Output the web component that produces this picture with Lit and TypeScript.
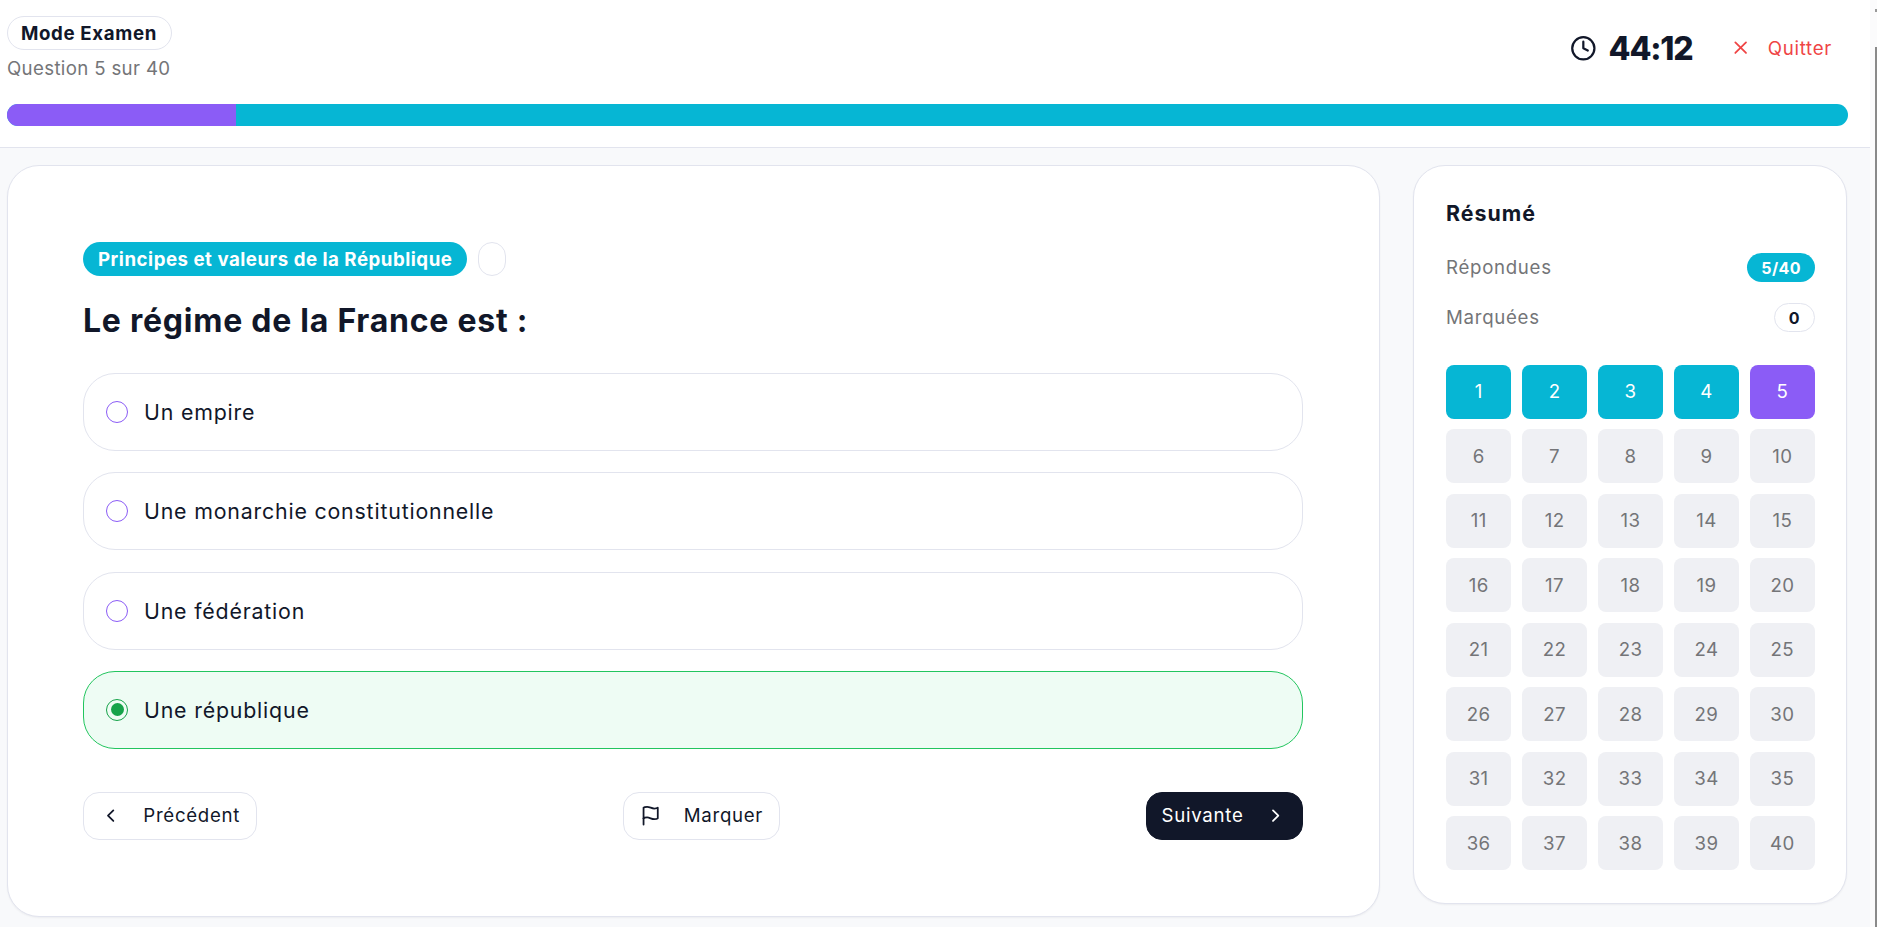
import { LitElement, html, css, svg } from "lit";
import { customElement } from "lit/decorators.js";

const OPTIONS = ["Un empire", "Une monarchie constitutionnelle", "Une fédération", "Une république"];
const SELECTED = 3;
const CURRENT = 5;

const icon = (body: unknown) => html`<svg class="icon" viewBox="0 0 24 24" fill="none" stroke="currentColor" stroke-width="2" stroke-linecap="round" stroke-linejoin="round">${body}</svg>`;

@customElement("app-root")
export class AppRoot extends LitElement {
  static styles = css`
    :host {
      display: flex;
      height: 927px;
      overflow: hidden;
      background: #f8f9fb;
      color: #111729;
      font-family: Inter, "Liberation Sans", sans-serif;
    }
    .page { width: 1870px; flex: none; }
    .icon { width: 21.33px; height: 21.33px; flex: none; }

    .track { flex: 1; display: flex; flex-direction: column; align-items: flex-end; background: #fbfbfc; }
    .arrow { width: 2px; height: 3px; margin-top: 9px; background: #9a9a9a; }
    .thumb { width: 2px; flex: 1; margin-top: 35px; background: #8a8a8a; }

    .top {
      background: #fff;
      border-bottom: 1px solid #e2e4ee;
      height: 148px;
      box-sizing: border-box;
      padding: 16px 22px 0 7px;
    }
    .top-row { display: flex; justify-content: space-between; height: 88px; }
    .pill {
      display: inline-flex;
      align-items: center;
      height: 34px;
      box-sizing: border-box;
      border: 1px solid #e2e4ee;
      border-radius: 17px;
      padding: 0 14px 0 13px;
      font-size: 18.67px;
      font-weight: 700;
      letter-spacing: 0.65px;
    }
    .count { color: #747578; font-size: 18.67px; line-height: 28px; margin-top: 5px; letter-spacing: 0.34px; }
    .top-right { display: flex; align-items: center; height: 64px; }
    .timer { display: flex; align-items: center; gap: 12px; font-size: 32px; font-weight: 800; letter-spacing: -1.2px; }
    .timer .icon { width: 26.67px; height: 26.67px; }
    .quit { display: flex; align-items: center; gap: 16.5px; margin-left: 37.5px; padding-right: 16px; color: #ef4444; font-size: 18.67px; letter-spacing: 0.7px; }
    .bar { height: 22px; border-radius: 11px; background: #06b6d4; overflow: hidden; width: 1841px; }
    .bar div { height: 100%; width: 229px; background: #8b5cf6; }

    .body { display: flex; align-items: flex-start; gap: 33px; padding: 17px 0 0 7px; }
    .card {
      background: #fff;
      border: 1px solid #e2e4ee;
      border-radius: 32px;
      box-sizing: border-box;
      box-shadow: 0 1px 2px rgba(17, 23, 41, 0.05);
    }
    .main { width: 1373px; height: 752px; padding: 76px 76px 0 75px; }
    .tags { display: flex; gap: 11px; }
    .tag {
      height: 34px;
      display: flex;
      align-items: center;
      padding: 0 15px;
      border-radius: 17px;
      background: #06b6d4;
      color: #fff;
      font-size: 18.67px;
      font-weight: 700;
      letter-spacing: 0.52px;
    }
    .tag-empty { width: 28px; height: 34px; box-sizing: border-box; border: 1px solid #e2e4ee; border-radius: 14px; }
    h1 { margin: 21px 0 28px; font-size: 32px; line-height: 48px; font-weight: 700; letter-spacing: 0.75px; }
    .options { display: flex; flex-direction: column; gap: 21.33px; }
    .option {
      display: flex;
      align-items: center;
      gap: 16px;
      height: 78px;
      box-sizing: border-box;
      padding: 0 22px;
      border: 1px solid #e2e4ee;
      border-radius: 32px;
      font-size: 21.33px;
      letter-spacing: 0.82px;
    }
    .option.on { background: #eefcf4; border-color: #22c55e; }
    .radio {
      width: 22px;
      height: 22px;
      box-sizing: border-box;
      border: 1px solid #8b5cf6;
      border-radius: 50%;
      display: flex;
      align-items: center;
      justify-content: center;
    }
    .on .radio { border-color: #16a34a; }
    .on .radio::after { content: ""; width: 13px; height: 13px; border-radius: 50%; background: #16a34a; }
    .nav { display: flex; justify-content: space-between; margin-top: 43px; }
    .btn {
      display: flex;
      align-items: center;
      gap: 22px;
      height: 48px;
      box-sizing: border-box;
      padding: 0 16px;
      border: 1px solid #e2e4ee;
      border-radius: 16px;
      background: #fff;
      font-size: 18.67px;
      letter-spacing: 0.7px;
    }
    .btn.dark { gap: 21px; padding: 0 16px 0 14px; background: #111729; border-color: #111729; color: #fff; letter-spacing: 0.75px; }

    .side { width: 434px; height: 739px; padding: 31px 31px 0 32px; }
    h2 { margin: 0 0 24px; font-size: 21.33px; line-height: 32px; font-weight: 700; letter-spacing: 1px; }
    .stat { display: flex; justify-content: space-between; align-items: center; height: 29px; margin-bottom: 21.33px; color: #747578; font-size: 18.67px; letter-spacing: 0.7px; }
    .chip {
      height: 29px;
      min-width: 40px;
      box-sizing: border-box;
      display: flex;
      align-items: center;
      justify-content: center;
      padding: 0 14px;
      border-radius: 15px;
      font-size: 16px;
      font-weight: 700;
      letter-spacing: 0.4px;
      background: #06b6d4;
      color: #fff;
    }
    .chip.plain { background: #fff; border: 1px solid #e2e4ee; color: #111729; }
    .grid { display: grid; grid-template-columns: repeat(5, 1fr); gap: 10.5px 10.67px; margin-top: 32.67px; }
    .cell {
      height: 54px;
      display: flex;
      align-items: center;
      justify-content: center;
      border-radius: 8px;
      background: #eff0f4;
      color: #747578;
      font-size: 18.67px;
      letter-spacing: 0.4px;
    }
    .cell.done { background: #06b6d4; color: #fff; }
    .cell.now { background: #8b5cf6; color: #fff; }
  `;

  render() {
    const cells = Array.from({ length: 40 }, (_, i) => i + 1);
    return html`
      <div class="page">
        <header class="top">
          <div class="top-row">
            <div>
              <div class="pill">Mode Examen</div>
              <div class="count">Question 5 sur 40</div>
            </div>
            <div class="top-right">
              <div class="timer">
                ${icon(svg`<circle cx="12" cy="12" r="10"/><path d="M12 6v6l4 2"/>`)}
                <span>44:12</span>
              </div>
              <div class="quit">
                ${icon(svg`<path d="M18 6 6 18M6 6l12 12"/>`)}
                <span>Quitter</span>
              </div>
            </div>
          </div>
          <div class="bar"><div></div></div>
        </header>
        <div class="body">
          <section class="card main">
            <div class="tags">
              <div class="tag">Principes et valeurs de la République</div>
              <div class="tag-empty"></div>
            </div>
            <h1>Le régime de la France est :</h1>
            <div class="options">
              ${OPTIONS.map((o, i) => html`
                <div class="option ${i === SELECTED ? "on" : ""}">
                  <span class="radio"></span>
                  <span>${o}</span>
                </div>`)}
            </div>
            <div class="nav">
              <div class="btn">${icon(svg`<path d="m15 18-6-6 6-6"/>`)}<span>Précédent</span></div>
              <div class="btn">${icon(svg`<path d="M4 15s1-1 4-1 5 2 8 2 4-1 4-1V3s-1 1-4 1-5-2-8-2-4 1-4 1z"/><path d="M4 22v-7"/>`)}<span>Marquer</span></div>
              <div class="btn dark"><span>Suivante</span>${icon(svg`<path d="m9 18 6-6-6-6"/>`)}</div>
            </div>
          </section>
          <aside class="card side">
            <h2>Résumé</h2>
            <div class="stat"><span>Répondues</span><span class="chip">5/40</span></div>
            <div class="stat"><span>Marquées</span><span class="chip plain">0</span></div>
            <div class="grid">
              ${cells.map((n) => html`<div class="cell ${n < CURRENT ? "done" : n === CURRENT ? "now" : ""}">${n}</div>`)}
            </div>
          </aside>
        </div>
      </div>
      <div class="track"><div class="arrow"></div><div class="thumb"></div></div>
    `;
  }
}
